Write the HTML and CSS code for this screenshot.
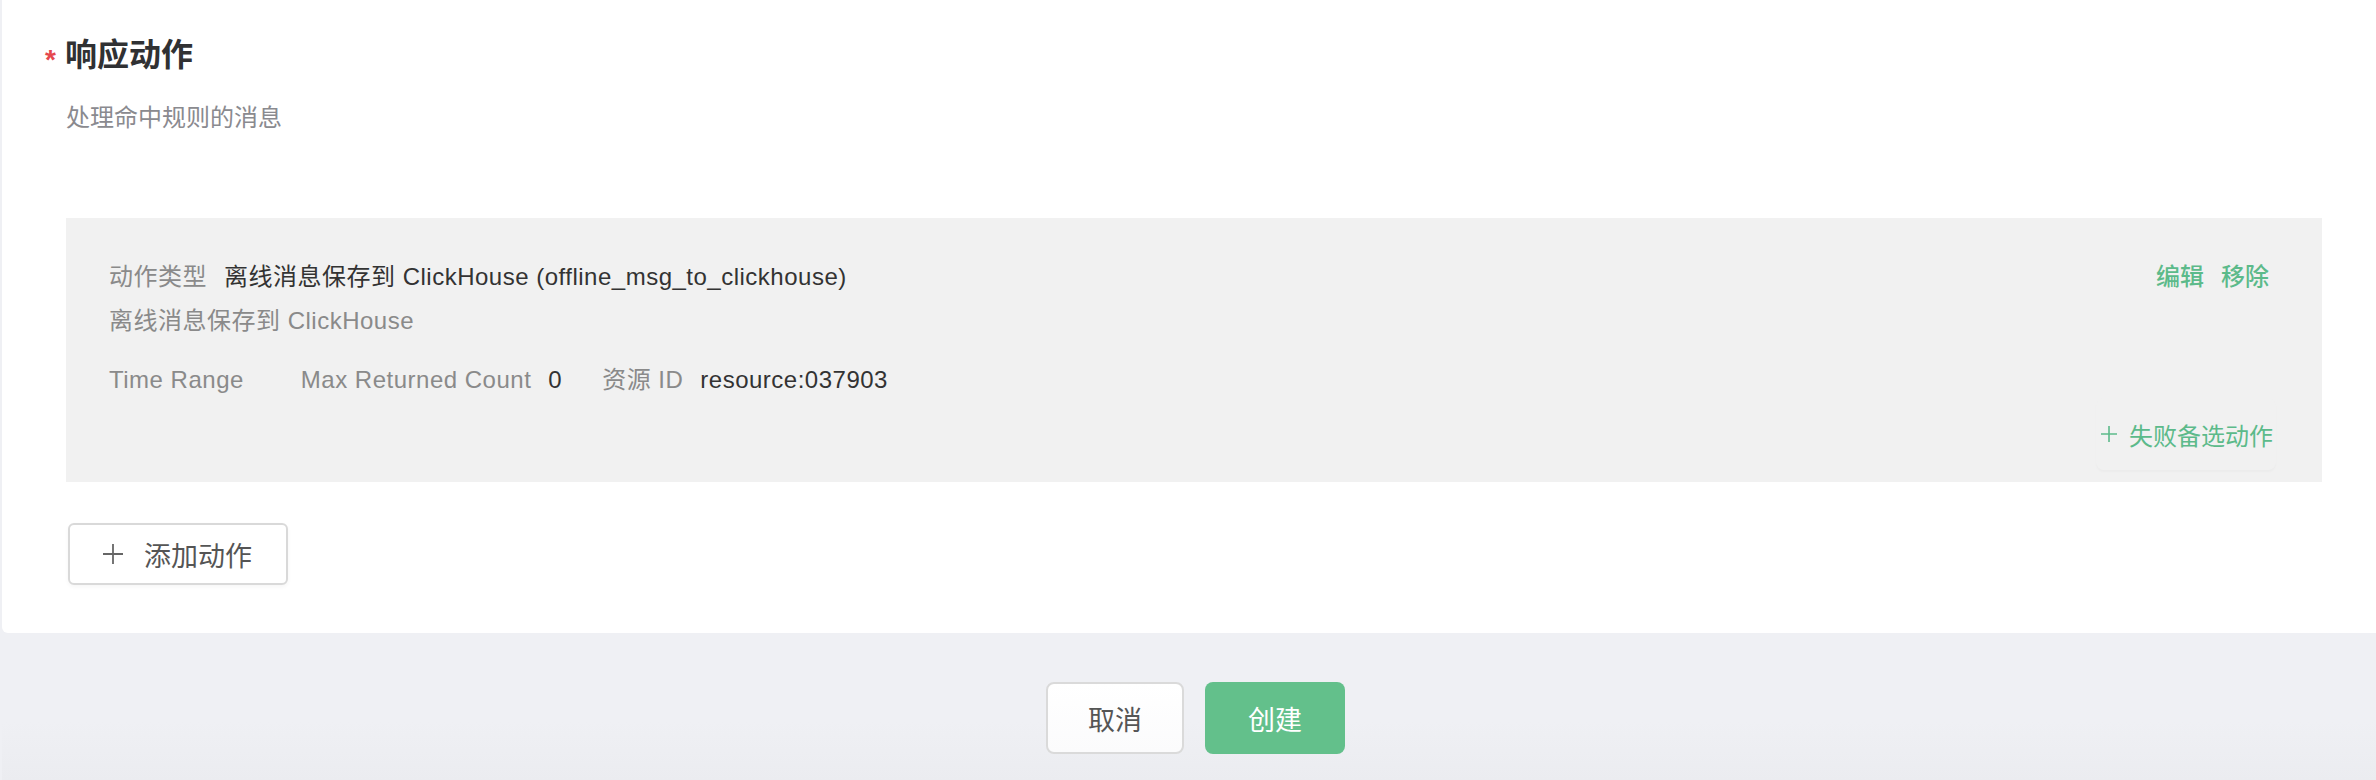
FILE: index.html
```html
<!DOCTYPE html>
<html lang="zh-CN">
<head>
<meta charset="utf-8">
<title>响应动作</title>
<link rel="stylesheet" href="styles.css">
</head>
<body>
<div class="page">
  <div class="strip"></div>
  <div class="main">
    <section class="card">
      <h2 class="title"><span class="req">*</span>响应动作</h2>
      <p class="subtitle">处理命中规则的消息</p>
      <div class="action-box">
        <div class="row-top">
          <div class="field">
            <span class="label">动作类型</span>
            <span class="value">离线消息保存到 ClickHouse (offline_msg_to_clickhouse)</span>
          </div>
          <div class="ops">
            <a class="op">编辑</a>
            <a class="op">移除</a>
          </div>
        </div>
        <div class="desc">离线消息保存到 ClickHouse</div>
        <div class="params">
          <div class="param"><span class="label">Time Range</span><span class="value"></span></div>
          <div class="param"><span class="label">Max Returned Count</span><span class="value">0</span></div>
          <div class="param"><span class="label">资源 ID</span><span class="value">resource:037903</span></div>
        </div>
        <div class="fallback-row">
          <button class="fallback-btn">
            <svg class="plus-sm" viewBox="0 0 18 18" width="18" height="18"><path d="M9 1v16M1 9h16" stroke="currentColor" stroke-width="1.6" fill="none"/></svg>
            <span>失败备选动作</span>
          </button>
        </div>
      </div>
      <button class="add-btn">
        <svg class="plus" viewBox="0 0 22 22" width="22" height="22"><path d="M11 1v20M1 11h20" stroke="currentColor" stroke-width="1.8" fill="none"/></svg>
        <span>添加动作</span>
      </button>
    </section>
    <footer class="footer">
      <button class="btn btn-cancel">取消</button>
      <button class="btn btn-primary">创建</button>
    </footer>
  </div>
</div>
</body>
</html>
```

FILE: styles.css
```css
* { box-sizing: border-box; }
html, body {
  margin: 0;
  padding: 0;
  height: 780px;
  overflow: hidden;
  font-family: "Liberation Sans", "Noto Sans CJK SC", sans-serif;
  background: #eff0f4;
}
.page {
  display: flex;
  height: 780px;
}
.strip {
  width: 2px;
  flex: none;
  background: #eff0f4;
}
.main {
  flex: 1;
  display: flex;
  flex-direction: column;
}
.card {
  background: #ffffff;
  border-bottom-left-radius: 6px;
  padding: 34px 54px 48px 64px;
  display: flex;
  flex-direction: column;
  align-items: flex-start;
}
.title {
  margin: 0;
  display: flex;
  align-items: flex-start;
  font-size: 32px;
  line-height: 42px;
  font-weight: 700;
  color: #303133;
}
.req {
  color: #e5484d;
  font-size: 28px;
  line-height: 28px;
  font-weight: 700;
  margin-left: -21px;
  margin-right: 9px;
  position: relative;
  top: 12px;
}
.subtitle {
  margin: 24px 0 0;
  font-size: 24px;
  line-height: 36px;
  color: #8a8a8f;
}
.action-box {
  align-self: stretch;
  margin-top: 82px;
  background: #f1f1f1;
  padding: 41px 49px 12px 43px;
  display: flex;
  flex-direction: column;
}
.row-top {
  display: flex;
  justify-content: space-between;
  align-items: center;
  line-height: 36px;
}
.field, .param {
  display: flex;
  align-items: center;
  font-size: 24px;
  line-height: 36px;
  letter-spacing: 0.5px;
}
.label { color: #8a8a8a; }
.value { color: #333333; margin-left: 17px; }
.ops {
  display: flex;
  gap: 17px;
  margin-right: 4px;
}
.op {
  font-size: 24px;
  font-weight: 500;
  color: #5cba8a;
  cursor: pointer;
}
.desc {
  margin-top: 8px;
  font-size: 24px;
  line-height: 36px;
  letter-spacing: 0.5px;
  color: #8a8a8a;
}
.params {
  margin-top: 23px;
  display: flex;
  gap: 40px;
}
.fallback-row {
  display: flex;
  justify-content: flex-end;
}
.fallback-btn {
  display: flex;
  align-items: center;
  gap: 11px;
  height: 72px;
  padding: 0 3px 0 4px;
  border: none;
  border-radius: 8px;
  background: #f1f1f1;
  box-shadow: 0 2px 2px rgba(0, 0, 0, 0.025);
  color: #5cba8a;
  font-family: inherit;
  font-size: 24px;
  margin-right: -3px;
}
.plus-sm { display: block; }
.add-btn {
  margin-top: 41px;
  margin-left: 2px;
  width: 220px;
  height: 62px;
  display: flex;
  align-items: center;
  gap: 20px;
  padding: 0 0 0 32px;
  background: #ffffff;
  border: 2px solid #d9d9d9;
  border-radius: 6px;
  box-shadow: 0 2px 4px rgba(0, 0, 0, 0.04);
  color: #555555;
  font-family: inherit;
  font-size: 27px;
}
.plus { display: block; color: #666666; }
.footer {
  flex: 1;
  display: flex;
  justify-content: center;
  align-items: flex-start;
  gap: 21px;
  padding: 49px 0 0 13px;
  background: linear-gradient(#eff0f4 0%, #eff0f4 60%, #ebecf0 100%);
}
.btn {
  height: 72px;
  border-radius: 8px;
  font-family: inherit;
  font-size: 27px;
}
.btn-cancel {
  width: 138px;
  background: linear-gradient(#ffffff, #fbfbfc);
  border: 2px solid #dadada;
  color: #555555;
}
.btn-primary {
  width: 140px;
  background: #63c08b;
  border: none;
  color: #ffffff;
}
```
